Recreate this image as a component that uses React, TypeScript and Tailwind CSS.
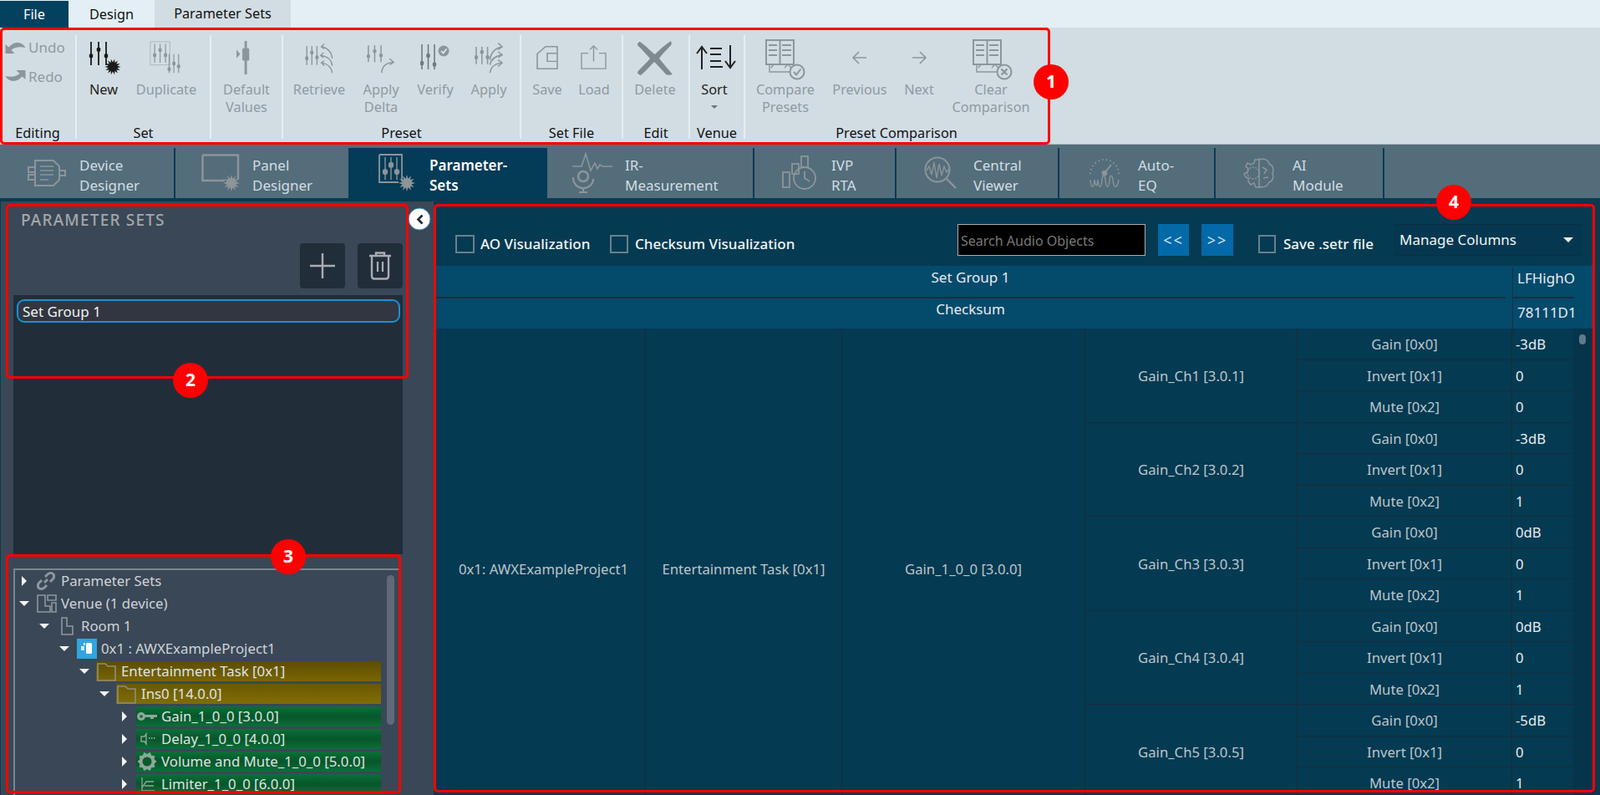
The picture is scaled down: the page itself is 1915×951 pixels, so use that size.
import React from "react";

const G = "#8b969c";
const star = (cx: number, cy: number, r1: number, r2: number, n = 12) => {
  const p: string[] = [];
  for (let i = 0; i < n * 2; i++) {
    const r = i % 2 ? r2 : r1;
    const a = (Math.PI * i) / n;
    p.push(`${(cx + r * Math.cos(a)).toFixed(1)},${(cy + r * Math.sin(a)).toFixed(1)}`);
  }
  return p.join(" ");
};

function Sl({ x, y, h, c, gap = 9, sw = 1.6, k = [0.45, 0.25, 0.6], n = 3 }: { x: number; y: number; h: number; c: string; gap?: number; sw?: number; k?: number[]; n?: number }) {
  return (
    <g>
      {Array.from({ length: n }).map((_, i) => (
        <g key={i}>
          <line x1={x + i * gap} y1={y} x2={x + i * gap} y2={y + h} stroke={c} strokeWidth={sw} />
          <rect x={x + i * gap - 2.2} y={y + h * k[i % 3] - 2.5} width={4.4} height={5} rx={1.5} fill={c} />
        </g>
      ))}
    </g>
  );
}

const Arrow = ({ d, c = G, head }: { d: string; c?: string; head: string }) => (
  <g fill="none" stroke={c} strokeWidth="1.6">
    <path d={d} />
    <path d={head} />
  </g>
);

function UndoI({ flip }: { flip?: boolean }) {
  return (
    <svg width="25" height="17" viewBox="0 0 25 17" className={flip ? "rotate-180" : ""}>
      <path d="M0.5 5 L0.5 16 L11.5 16 L7.5 12 C11 8.5 17 7.5 24.5 9 C21 2.5 12 0 4.5 8.5 Z" fill={G} />
    </svg>
  );
}

const icons: Record<string, React.ReactNode> = {
  New: (
    <svg width="40" height="42" viewBox="0 0 40 42" className="ml-[4px]">
      <Sl x={3} y={2} h={28} c="#1a1a1a" gap={9} sw={1.8} k={[0.6, 0.33, 0.6]} />
      <polygon points={star(29, 32, 9.5, 5.5, 14)} fill="#1a1a1a" />
    </svg>
  ),
  Duplicate: (
    <svg width="42" height="40" viewBox="0 0 46 46">
      <rect x="1" y="1" width="27" height="32" fill="none" stroke={G} strokeWidth="1" strokeDasharray="1.5 1" />
      <Sl x={7} y={4} h={26} c={G} gap={7.5} sw={1.4} k={[0.6, 0.33, 0.6]} />
      <Sl x={27} y={18} h={26} c={G} gap={6.5} sw={1.4} k={[0.8, 0.5, 0.65]} />
    </svg>
  ),
  "Default Values": (
    <svg width="21" height="40" viewBox="0 0 24 46" className="-ml-[4px]">
      <rect x="11" y="0" width="3.4" height="46" fill={G} />
      <rect x="8" y="10" width="9.5" height="17" rx="1.5" fill={G} />
      <path d="M0 12 L5 18 L0 24 Z" fill={G} />
    </svg>
  ),
  Retrieve: (
    <svg width="36" height="40" viewBox="0 0 40 46">
      <Sl x={3} y={7} h={26} c={G} gap={7} k={[0.65, 0.35, 0.6]} />
      <Arrow d="M38 24 C37 15 31 9 23 8" head="M27 4 L23 8 L27 11" />
      <Arrow d="M38 34 C37 26 31 21 22 20" head="M26 16 L22 20 L26 23" />
      <Arrow d="M38 44 C37 36 31 31 23 30" head="M27 27 L23 30 L27 34" />
    </svg>
  ),
  "Apply Delta": (
    <svg width="34" height="37" viewBox="0 0 36 46" className="mt-[2px]" preserveAspectRatio="none">
      <Sl x={2} y={4} h={25} c={G} gap={8} k={[0.65, 0.35, 0.6]} />
      <Arrow d="M19 45 C19 35 24 30 34 29" head="M29 24 L34 29 L29 33" />
    </svg>
  ),
  Verify: (
    <svg width="36" height="34" viewBox="0 0 36 34">
      <Sl x={2} y={1} h={30} c="#6f7a80" gap={7.5} k={[0.75, 0.45, 0.8]} />
      <circle cx="28" cy="9" r="6.5" fill={G} />
      <path d="M25 9 L27.5 11.5 L31.5 6.5" fill="none" stroke="#e6edf0" strokeWidth="1.6" />
    </svg>
  ),
  Apply: (
    <svg width="35" height="40" viewBox="0 0 36 46" preserveAspectRatio="none">
      <Sl x={2} y={8} h={24} c={G} gap={7} k={[0.6, 0.3, 0.6]} />
      <Arrow d="M19 26 C20 15 25 10 34 8" head="M29 3 L34 8 L29 12" />
      <Arrow d="M19 33 C20 25 25 21 34 19" head="M29 15 L34 19 L29 23" />
      <Arrow d="M19 44 C20 35 25 31 34 30" head="M29 26 L34 30 L29 35" />
    </svg>
  ),
  Save: (
    <svg width="26" height="30" viewBox="0 0 26 34" preserveAspectRatio="none">
      <path d="M1 12 L11 2 L25 2 L25 32 L1 32 Z" fill="none" stroke={G} strokeWidth="1.6" />
      <path d="M25 11 L13 11 L13 22 L25 22" fill="none" stroke={G} strokeWidth="1.6" />
    </svg>
  ),
  Load: (
    <svg width="32" height="30" viewBox="0 0 32 34" preserveAspectRatio="none">
      <path d="M9 11 L1 11 L1 32 L30 32 L30 11 L22 11" fill="none" stroke={G} strokeWidth="1.4" />
      <path d="M15.5 22 L15.5 1 M11 6 L15.5 1 L20 6" fill="none" stroke={G} strokeWidth="1.4" />
    </svg>
  ),
  Delete: (
    <svg width="46" height="46" viewBox="0 0 46 46">
      <path d="M5 4 C14 10 18 16 23 19 C28 14 34 8 42 3 C43 6 43 7 42 8 C36 15 31 19 28 24 C33 30 38 36 44 43 C40 44 38 44 36 43 C31 37 27 33 22 28 C17 33 11 40 6 44 C3 43 2 42 2 40 C8 33 13 29 17 24 C12 18 7 13 2 8 C2 6 3 4 5 4 Z" fill="#7f8a90" />
    </svg>
  ),
  Sort: (
    <svg width="48" height="30" viewBox="0 0 48 30" className="ml-[4px]">
      <path d="M7 29 L7 2 M1 10 L7 2 L13 10" fill="none" stroke="#222" strokeWidth="2" />
      <path d="M41 0 L41 27 M35 19 L41 27 L47 19" fill="none" stroke="#222" strokeWidth="2" />
      <path d="M17 4 H31 M17 11 H30 M17 19 H30 M17 26 H32" stroke="#222" strokeWidth="2" />
    </svg>
  ),
  "Compare Presets": (
    <svg width="50" height="52" viewBox="0 0 50 52" className="mt-[6px]">
      <path d="M2 2 H35 V31 H2 Z M18.5 2 V31" fill="none" stroke={G} strokeWidth="2" />
      <path d="M5 8 H15 M5 14 H15 M5 20 H15 M21 8 H32 M21 14 H32 M21 20 H32" stroke={G} strokeWidth="2" />
      <path d="M6 31 V40 H30 M8 35 L11 31 M24 35 L28 31 L32 35" fill="none" stroke={G} strokeWidth="1.4" />
      <circle cx="39" cy="40" r="8.5" fill="#d2dde3" stroke={G} strokeWidth="2" />
      <path d="M35 40 L38 43.5 L43.5 36.5" fill="none" stroke={G} strokeWidth="2" />
    </svg>
  ),
  Previous: (
    <svg width="20" height="18" viewBox="0 0 20 18">
      <path d="M18 9 H2 M9 2 L2 9 L9 16" fill="none" stroke={G} strokeWidth="1.6" />
    </svg>
  ),
  Next: (
    <svg width="20" height="18" viewBox="0 0 20 18">
      <path d="M2 9 H18 M11 2 L18 9 L11 16" fill="none" stroke={G} strokeWidth="1.6" />
    </svg>
  ),
  "Clear Comparison": (
    <svg width="50" height="52" viewBox="0 0 50 52" className="mt-[6px] ml-[3px]">
      <path d="M2 2 H35 V31 H2 Z M18.5 2 V31" fill="none" stroke={G} strokeWidth="2" />
      <path d="M5 8 H15 M5 14 H15 M5 20 H15 M21 8 H32 M21 14 H32 M21 20 H32" stroke={G} strokeWidth="2" />
      <path d="M6 31 V40 H30 M8 35 L11 31 M24 35 L28 31 L32 35" fill="none" stroke={G} strokeWidth="1.4" />
      <circle cx="39" cy="40" r="8.5" fill="#d2dde3" stroke={G} strokeWidth="2" />
      <path d="M35.5 36.5 L42.5 43.5 M42.5 36.5 L35.5 43.5" fill="none" stroke={G} strokeWidth="2.4" />
    </svg>
  ),
};

type Item = { key: string; lines: string[]; w: string; dark?: boolean; caret?: boolean };
type Group = { label: string; w: string; items: Item[] };

const groups: Group[] = [
  { label: "Set", w: "w-[159px]", items: [
    { key: "New", lines: ["New"], w: "w-[64px]", dark: true },
    { key: "Duplicate", lines: ["Duplicate"], w: "w-[86px]" } ] },
  { label: "", w: "w-[84px]", items: [ { key: "Default Values", lines: ["Default", "Values"], w: "w-[84px]" } ] },
  { label: "Preset", w: "w-[283px]", items: [
    { key: "Retrieve", lines: ["Retrieve"], w: "w-[86px]" },
    { key: "Apply Delta", lines: ["Apply", "Delta"], w: "w-[62px]" },
    { key: "Verify", lines: ["Verify"], w: "w-[68px]" },
    { key: "Apply", lines: ["Apply"], w: "w-[60px]" } ] },
  { label: "Set File", w: "w-[120px]", items: [
    { key: "Save", lines: ["Save"], w: "w-[62px]" },
    { key: "Load", lines: ["Load"], w: "w-[50px]" } ] },
  { label: "Edit", w: "w-[78px]", items: [ { key: "Delete", lines: ["Delete"], w: "w-[76px]" } ] },
  { label: "Venue", w: "w-[64px]", items: [ { key: "Sort", lines: ["Sort"], w: "w-[58px]", dark: true, caret: true } ] },
  { label: "Preset Comparison", w: "w-[362px]", items: [
    { key: "Compare Presets", lines: ["Compare", "Presets"], w: "w-[96px]" },
    { key: "Previous", lines: ["Previous"], w: "w-[82px]" },
    { key: "Next", lines: ["Next"], w: "w-[60px]" },
    { key: "Clear Comparison", lines: ["Clear", "Comparison"], w: "w-[112px]" } ] },
];

const Sep = () => <div className="w-[2px] h-[124px] mt-[9px] bg-[#e6eef2] shrink-0" />;

function Ribbon() {
  return (
    <div className="h-[140px] bg-[#d2dde3] flex shrink-0 border-b border-[#aab6bc] text-[16.3px]">
      <div className="w-[90px] shrink-0 flex flex-col">
        <div className="h-[114px] pl-[6px] pt-[15px] flex flex-col gap-[18px] text-[#8f9a9f]">
          <div className="flex items-center gap-[3px] h-[17px] text-[17px]"><UndoI /><span>Undo</span></div>
          <div className="flex items-center gap-[3px] h-[17px] text-[17px]"><UndoI flip /><span>Redo</span></div>
        </div>
        <div className="text-center text-[#111] leading-[24px]">Editing</div>
      </div>
      {groups.map((g) => (
        <React.Fragment key={g.w + g.label}>
          <Sep />
          <div className={`${g.w} shrink-0 flex flex-col`}>
            <div className="h-[114px] flex">
              {g.items.map((it) => (
                <div key={it.key} className={`${it.w} shrink-0 flex flex-col items-center`}>
                  <div className="h-[57px] mt-[7px] flex items-center justify-center">{icons[it.key]}</div>
                  <div className={`text-center leading-[21px] ${it.dark ? "text-[#222]" : "text-[#8f9a9f]"}`}>
                    {it.lines.map((l) => <div key={l}>{l}</div>)}
                    {it.caret && <div className="w-0 h-0 mx-auto mt-[8px] border-x-[4px] border-x-transparent border-t-[4px] border-t-[#6d777c]" />}
                  </div>
                </div>
              ))}
            </div>
            <div className="text-center text-[#111] leading-[24px]">{g.label}</div>
          </div>
        </React.Fragment>
      ))}
    </div>
  );
}

const N = "#8d9599";
const navIcons: Record<string, React.ReactNode> = {
  device: (
    <svg width="46" height="34" viewBox="0 0 46 34" fill="none" stroke={N} strokeWidth="2">
      <path d="M9 2 H31 L38 9 V25 L31 32 H9 Z" />
      <path d="M1 10 H9 V16 H1 Z M1 19 H9 V25 H1 Z M38 14 H45 V20 H38 Z" />
      <path d="M15 9 H31 M15 14 H31 M15 19 H31 M15 25 H25" strokeWidth="1.5" />
    </svg>
  ),
  panel: (
    <svg width="46" height="46" viewBox="0 0 46 46" fill="none" stroke={N} strokeWidth="2.4">
      <path d="M1.5 1.5 H44 V31 M1.5 1.5 V32 H28" />
      <polygon points={star(36, 35, 10, 5.5, 12)} fill={N} stroke="none" />
    </svg>
  ),
  params: (
    <svg width="46" height="46" viewBox="0 0 46 46" fill="none" stroke={N} strokeWidth="1.8">
      <path d="M1 1 H28 V33 M1 1 V34 H24" />
      <Sl x={8} y={4} h={27} c={N} gap={7} sw={1.4} k={[0.65, 0.35, 0.65]} />
      <polygon points={star(34, 35, 10, 5.5, 12)} fill={N} stroke="none" />
    </svg>
  ),
  ir: (
    <svg width="48" height="50" viewBox="0 0 48 50" fill="none" stroke={N} strokeWidth="1.6">
      <path d="M0 17 H11 L16 2 L22 22 L27 13 L30 20 L33 15 L36 17 H48" />
      <circle cx="13" cy="29" r="6" strokeWidth="2.5" />
      <path d="M1 30 C1 39 7 43 13 43 C19 43 25 39 25 32 M13 43 V48 M8 48 H18" strokeWidth="2.2" />
    </svg>
  ),
  ivp: (
    <svg width="42" height="42" viewBox="0 0 42 42" fill="none" stroke={N} strokeWidth="1.8">
      <rect x="1" y="20" width="8" height="18" />
      <rect x="12" y="10" width="8" height="12" />
      <rect x="23" y="1" width="8" height="13" />
      <circle cx="27" cy="27" r="13" />
      <path d="M27 19 V27 L33 31" />
    </svg>
  ),
  central: (
    <svg width="40" height="40" viewBox="0 0 40 40" fill="none" stroke={N} strokeWidth="1.4">
      <circle cx="16" cy="16" r="14.5" strokeWidth="2" />
      <path d="M3 17 L6 12 L9 22 L12 7 L15 26 L18 9 L21 23 L24 12 L27 19 L30 15" />
      <path d="M27 27 L38 38" strokeWidth="2.4" />
    </svg>
  ),
  auto: (
    <svg width="38" height="38" viewBox="0 0 38 38" fill="none" stroke={N} strokeWidth="1.4">
      <path d="M2 20 A17 17 0 0 1 36 20" strokeWidth="2" strokeDasharray="1.5 3.2" />
      <path d="M19 19 L27 9" strokeWidth="2" />
      <circle cx="19" cy="19" r="2.6" fill={N} />
      <path d="M2 27 C3 38 6 38 7 27 C8 34 10 38 11 27 C12 38 15 38 16 27 C17 20 19 20 20 27 C21 38 24 38 25 27 C26 20 28 21 29 27 C30 38 34 38 36 27" />
    </svg>
  ),
  ai: (
    <svg width="38" height="38" viewBox="0 0 38 38" fill="none" stroke={N} strokeWidth="1.5">
      <path d="M18 3 L14 3 L13 7 L9 9 L5 7 L3 11 L6 14 L5 18 L1 20 L3 24 L6 25 L6 29 L9 33 L13 31 L15 36 L19 36" />
      <circle cx="12" cy="19" r="7" strokeDasharray="2 1.5" />
      <path d="M19 1 V37 M19 3 C25 1 30 3 31 8 C36 10 37 15 35 19 C37 24 35 29 31 30 C29 35 24 37 19 35" />
      <path d="M23 12 L28 15 L25 20 M24 25 L30 24" />
    </svg>
  ),
};

const navs = [
  { id: "device", a: "Device", b: "Designer", w: "w-[209px]", pl: "pl-[32px]", iw: "w-[62px]" },
  { id: "panel", a: "Panel", b: "Designer", w: "w-[209px]", pl: "pl-[31px]", iw: "w-[61px]" },
  { id: "params", a: "Parameter-", b: "Sets", w: "w-[236px]", pl: "pl-[34px]", iw: "w-[61px]", active: true },
  { id: "ir", a: "IR-", b: "Measurement", w: "w-[248px]", pl: "pl-[30px]", iw: "w-[63px]" },
  { id: "ivp", a: "IVP", b: "RTA", w: "w-[170px]", pl: "pl-[33px]", iw: "w-[59px]" },
  { id: "central", a: "Central", b: "Viewer", w: "w-[195px]", pl: "pl-[33px]", iw: "w-[59px]" },
  { id: "auto", a: "Auto-", b: "EQ", w: "w-[187px]", pl: "pl-[35px]", iw: "w-[59px]" },
  { id: "ai", a: "AI", b: "Module", w: "w-[202px]", pl: "pl-[33px]", iw: "w-[59px]" },
];

function NavTabs() {
  return (
    <div className="h-[64px] pt-[4px] bg-[#536d7b] shrink-0">
      <div className="h-[60px] flex">
        <div className="w-px" />
        {navs.map((n) => (
          <div key={n.id} className={`${n.w} ${n.pl} shrink-0 h-full flex items-center border-r-2 ${n.active ? "bg-[#043b57] border-[#043b57] text-white font-semibold" : "border-[#0d3a50] text-[#d2dde3]"}`}>
            <div className={`${n.iw} shrink-0`}>{navIcons[n.id]}</div>
            <div className="text-[17px] leading-[24px] pt-[5px]">
              <div>{n.a}</div>
              <div>{n.b}</div>
            </div>
          </div>
        ))}
      </div>
    </div>
  );
}

const Tri = ({ open }: { open?: boolean }) =>
  open ? (
    <div className="w-0 h-0 border-x-[6px] border-x-transparent border-t-[6px] border-t-[#f2f4f5]" />
  ) : (
    <div className="w-0 h-0 border-y-[6px] border-y-transparent border-l-[6px] border-l-[#f2f4f5]" />
  );

const T = "#8e979f";
const treeIcons: Record<string, React.ReactNode> = {
  link: (
    <svg width="22" height="22" viewBox="0 0 22 22" fill="none" stroke={T} strokeWidth="3">
      <path d="M9 13 L13 9 M10 6 L13 3 C15 1 18 1 20 3 C21 5 21 7 19 9 L16 12 M12 16 L9 19 C7 21 4 21 2 19 C1 17 1 15 3 13 L6 10" />
    </svg>
  ),
  venue: (
    <svg width="24" height="22" viewBox="0 0 24 22" fill="none" stroke={T} strokeWidth="1.6">
      <path d="M1 1 H10 V14 H16 V21 H1 Z M13 1 H23 V7 H13 Z M18 10 H23 V21 H18 Z" />
    </svg>
  ),
  room: (
    <svg width="18" height="22" viewBox="0 0 18 22" fill="none" stroke={T} strokeWidth="1.6" className="ml-[3px]">
      <path d="M3 1 H9 V11 H16 V21 H3 Z" />
    </svg>
  ),
  chip: (
    <div className="w-[24px] h-[24px] bg-[#2fa6e0] flex items-center justify-center">
      <svg width="16" height="16" viewBox="0 0 16 16" fill="#fff">
        <rect x="7" y="1" width="7" height="13" rx="1.5" />
        <rect x="1" y="5" width="4" height="5" fill="#cfeafa" />
        <rect x="4" y="1" width="2" height="3" fill="#cfeafa" />
      </svg>
    </div>
  ),
  folder: (
    <svg width="24" height="24" viewBox="0 0 24 24" fill="none" stroke="#8d8f80" strokeWidth="1.6">
      <path d="M1 3 H10 L13 6 H22 V23 H1 Z" />
    </svg>
  ),
  gain: (
    <svg width="24" height="14" viewBox="0 0 24 14" fill="#8ea79a">
      <circle cx="5" cy="7" r="5" />
      <circle cx="5" cy="7" r="1.8" fill="#0a6a33" />
      <path d="M9 5 H24 V8 H20 V10 H16 V8 H9 Z" />
    </svg>
  ),
  delay: (
    <svg width="18" height="16" viewBox="0 0 18 16" fill="none" stroke="#8ea79a" strokeWidth="1.4" className="ml-[4px]">
      <path d="M1 5 H5 L7 2 V14 L5 11 H1 Z" />
      <path d="M10 7 H11.5 M13 7 H14.5 M16 7 H17.5" strokeWidth="2" />
    </svg>
  ),
  gear: (
    <svg width="24" height="24" viewBox="0 0 24 24">
      <polygon points={star(12, 12, 11.5, 9, 10)} fill="#8ea79a" />
      <circle cx="12" cy="12" r="5.5" fill="#0a5a2e" />
    </svg>
  ),
  lim: (
    <svg width="18" height="18" viewBox="0 0 18 18" fill="none" stroke="#8ea79a" strokeWidth="1.3" className="ml-[4px]">
      <path d="M2 1 V17 H17 M2 13 L7 6 H16 M5 11 H16" />
    </svg>
  ),
};

const rows: { t: string; pl: string; open?: boolean; icon: string; kind?: "gold" | "gold2" | "green" }[] = [
  { t: "Parameter Sets", pl: "pl-[3px]", icon: "link" },
  { t: "Venue (1 device)", pl: "pl-[3px]", open: true, icon: "venue" },
  { t: "Room 1", pl: "pl-[27px]", open: true, icon: "room" },
  { t: "0x1 : AWXExampleProject1", pl: "pl-[51px]", open: true, icon: "chip" },
  { t: "Entertainment Task [0x1]", pl: "pl-[75px]", open: true, icon: "folder", kind: "gold" },
  { t: "Ins0 [14.0.0]", pl: "pl-[99px]", open: true, icon: "folder", kind: "gold2" },
  { t: "Gain_1_0_0 [3.0.0]", pl: "pl-[123px]", icon: "gain", kind: "green" },
  { t: "Delay_1_0_0 [4.0.0]", pl: "pl-[123px]", icon: "delay", kind: "green" },
  { t: "Volume and Mute_1_0_0 [5.0.0]", pl: "pl-[123px]", icon: "gear", kind: "green" },
  { t: "Limiter_1_0_0 [6.0.0]", pl: "pl-[123px]", icon: "lim", kind: "green" },
];

const kindCls: Record<string, string> = {
  gold: "bg-gradient-to-b from-[#5d4d02] to-[#7a6603] text-[#dfe3e3]",
  gold2: "bg-gradient-to-b from-[#6a5803] to-[#816d05] text-[#dfe3e3]",
  green: "bg-gradient-to-b from-[#0b7038] via-[#06562a] to-[#0b7038] text-[#dfe3e3]",
};

function Tree() {
  return (
    <div className="h-[288px] pt-[17px] shrink-0 text-[16.8px]">
      <div className="w-[462px] h-[271px] border-t-2 border-l-2 border-[#7b8590] flex overflow-hidden">
        <div className="w-[438px] shrink-0 -mt-[1px]">
          {rows.map((r) => (
            <div key={r.t} className={`h-[27px] flex items-center ${r.pl} text-[#cdd3d8]`}>
              <div className="w-[16px] flex justify-center shrink-0"><Tri open={r.open} /></div>
              <div className={`ml-[6px] flex-1 h-[24px] flex items-center ${r.kind ? kindCls[r.kind] : ""}`}>
                <div className="w-[30px] shrink-0 flex items-center pl-px">{treeIcons[r.icon]}</div>
                <span className="whitespace-nowrap">{r.t}</span>
              </div>
            </div>
          ))}
        </div>
        <div className="w-[9px] h-[179px] mt-[6px] ml-[7px] rounded-full bg-[#5e6a78] shrink-0" />
      </div>
    </div>
  );
}

function LeftPanel() {
  return (
    <div className="w-[518px] ml-px shrink-0 bg-[#3a4756] flex flex-col pl-[15px] pt-[13px] h-[710px]">
      <div className="w-[466px] flex flex-col flex-1">
        <div className="h-[19px] pl-[9px] text-[19px] leading-[19px] font-medium tracking-[1.2px] text-[#a3a7ab]">PARAMETER SETS</div>
        <div className="flex justify-end gap-[15px] mt-[18px]">
          <div className="w-[54px] h-[54px] rounded-[4px] bg-[#222d3a] flex items-center justify-center">
            <svg width="32" height="32" viewBox="0 0 32 32"><path d="M16 1 V31 M1 16 H31" stroke="#a9adb2" strokeWidth="2.4" /></svg>
          </div>
          <div className="w-[54px] h-[54px] rounded-[4px] bg-[#222d3a] flex items-center justify-center">
            <svg width="28" height="34" viewBox="0 0 28 34" fill="none" stroke="#a9adb2" strokeWidth="2.4">
              <path d="M1 5 H27 M9 5 V1.5 H19 V5 M4 5 V29 C4 31 5 32.5 7 32.5 H21 C23 32.5 24 31 24 29 V5" />
              <path d="M11 12 V24 M17 12 V24" strokeWidth="2.2" />
            </svg>
          </div>
        </div>
        <div className="mt-[8px] flex-1 bg-[#222d3a] pt-[5px] pl-[4px] pr-[3px]">
          <div className="h-[28px] rounded-[9px] border-[2.5px] border-[#1793d1] bg-[#323640] text-[#f0f2f3] text-[17px] flex items-center pl-[5px] leading-none">Set Group 1</div>
        </div>
      </div>
      <Tree />
    </div>
  );
}

const Check = ({ w }: { w: string }) => <div className={`${w} h-[22px] mt-[13px] border-2 border-[#6b7f8c] shrink-0`} />;
const Label = ({ w, ml, children }: { w: string; ml: string; children: React.ReactNode }) => (
  <div className={`${w} ${ml} mt-[13px] h-[22px] leading-[22px] shrink-0 whitespace-nowrap font-['Roboto',sans-serif] font-medium text-[17px] text-[#f2f5f6]`}>{children}</div>
);

const channels = [
  { n: "Gain_Ch1 [3.0.1]", v: ["-3dB", "0", "0"] },
  { n: "Gain_Ch2 [3.0.2]", v: ["-3dB", "0", "1"] },
  { n: "Gain_Ch3 [3.0.3]", v: ["0dB", "0", "1"] },
  { n: "Gain_Ch4 [3.0.4]", v: ["0dB", "0", "1"] },
  { n: "Gain_Ch5 [3.0.5]", v: ["-5dB", "0", "1"] },
];
const props = ["Gain [0x0]", "Invert [0x1]", "Mute [0x2]"];
const LINE = "border-[#1a2b38]";

function RightPanel() {
  return (
    <div className="w-[1387px] ml-[2px] shrink-0 bg-[#043a52] flex flex-col h-[708px] mt-[2px] overflow-hidden text-[16.7px]">
      <div className="h-[75px] flex items-start pl-[24px] pt-[25px] shrink-0">
        <Check w="w-[23px]" />
        <Label w="w-[131px]" ml="ml-[7px]">AO Visualization</Label>
        <div className="ml-[24px]"><Check w="w-[22px]" /></div>
        <Label w="w-[190px]" ml="ml-[8px]">Checksum Visualization</Label>
        <div className="ml-[196px] w-[225px] h-[38px] bg-black border border-[#a8adb0] flex items-center pl-[3px] pt-[2px] text-[16px] text-[#77797b] shrink-0">Search Audio Objects</div>
        <div className="ml-[15px] w-[37px] h-[38px] bg-[#0369a8] flex items-center justify-center text-[#d9e6ee] tracking-[2px] text-[18px]">&lt;&lt;</div>
        <div className="ml-[15px] w-[38px] h-[38px] bg-[#0369a8] flex items-center justify-center text-[#d9e6ee] tracking-[2px] text-[18px]">&gt;&gt;</div>
        <div className="ml-[30px]"><Check w="w-[21px]" /></div>
        <Label w="w-[109px]" ml="ml-[9px]">Save .setr file</Label>
        <div className="ml-[24px] w-[224px] h-[38px] rounded-[4px] bg-[#053850] border-y border-[#0f2c3e] flex items-center justify-between pl-[6px] pr-[10px] text-[17px] text-[#f2f5f6] shrink-0">
          <span>Manage Columns</span>
          <div className="w-0 h-0 border-x-[6px] border-x-transparent border-t-[6px] border-t-[#f2f4f5]" />
        </div>
      </div>
      <div className="h-[75px] flex bg-[#044a6b] shrink-0 text-[#e6ecef] text-[17px]">
        <div className="w-[1289px] shrink-0">
          <div className="w-[1281px] h-[39px] border-b-2 border-[#13303f] text-center leading-[28px]">Set Group 1</div>
          <div className="w-[1281px] text-center leading-[26px]">Checksum</div>
        </div>
        <div className="w-[98px] border-l border-[#13303f] mt-px">
          <div className="h-[38px] w-[73px] border-b-2 border-[#13303f] pl-[5px] whitespace-nowrap leading-[28px]">LFHighO</div>
          <div className="w-[73px] pl-[5px] whitespace-nowrap leading-[34px]">78111D1</div>
        </div>
      </div>
      <div className="flex text-[#bcc5ca] overflow-hidden">
        <div className={`w-[252px] h-[576px] shrink-0 border-r ${LINE} flex items-center justify-center pl-[8px]`}>0x1: AWXExampleProject1</div>
        <div className={`w-[235px] h-[576px] shrink-0 border-r ${LINE} flex items-center justify-center`}>Entertainment Task [0x1]</div>
        <div className={`w-[291px] h-[576px] shrink-0 border-r ${LINE} flex items-center justify-center`}>Gain_1_0_0 [3.0.0]</div>
        <div className="w-[584px] shrink-0">
          {channels.map((c) => (
            <div key={c.n} className="flex">
              <div className={`w-[254px] h-[112.5px] shrink-0 border-r border-b ${LINE} flex items-center justify-center pt-[1px]`}>{c.n}</div>
              <div className="flex-1">
                {props.map((p, i) => (
                  <div key={p} className={`h-[37.5px] flex border-b ${LINE} pt-[1.5px]`}>
                    <div className={`w-[257px] shrink-0 -mt-[1.5px] pt-[1.5px] border-r ${LINE} flex items-center justify-center`}>{p}</div>
                    <div className="flex-1 pl-[4px] flex items-center text-[#e8edf0]">{c.v[i]}</div>
                  </div>
                ))}
              </div>
            </div>
          ))}
        </div>
        <div className="flex-1 flex justify-center pt-[7px] bg-[#05344b]">
          <div className="w-[8px] h-[12px] rounded-full bg-[#5e7a8a] mr-[3px]" />
        </div>
      </div>
    </div>
  );
}

const Anno = ({ cls }: { cls: string }) => <div className={`absolute border-[3px] border-[#ff0000] rounded-[5px] pointer-events-none ${cls}`} />;
const Badge = ({ cls, n }: { cls: string; n: number }) => (
  <div className={`absolute w-[42px] h-[42px] rounded-full bg-[#ff0000] text-white font-bold text-[21px] flex items-center justify-center font-['Liberation_Sans',sans-serif] ${cls}`}>{n}</div>
);

export default function App() {
  return (
    <div className="relative w-[1915px] h-[951px] overflow-hidden bg-[#0b3a50] font-['Open_Sans',sans-serif] text-[16px] flex flex-col">
      <div className="h-[33px] bg-[#e3eff5] flex items-end shrink-0 text-[#111] text-[16.3px]">
        <div className="w-[82px] h-[32px] bg-[#04415f] text-white flex items-center justify-center">File</div>
        <div className="w-[103px] h-[32px] flex items-center justify-center">Design</div>
        <div className="w-[163px] h-[33px] bg-[#d2dde3] flex items-center justify-center">Parameter Sets</div>
      </div>
      <Ribbon />
      <NavTabs />
      <div className="flex pt-[4px] flex-1 bg-[#0b3a50] items-start">
        <LeftPanel />
        <RightPanel />
      </div>

      <div className="absolute left-[502px] top-[262px] -translate-x-1/2 -translate-y-1/2 w-[27px] h-[27px] rounded-full bg-white border border-[#2f8fc4] flex items-center justify-center">
        <svg width="10" height="12" viewBox="0 0 10 12"><path d="M8 1 L3 6 L8 11" fill="none" stroke="#1d2a33" strokeWidth="2.6" /></svg>
      </div>

      <Anno cls="left-0 top-[33px] w-[1257px] h-[140px]" />
      <Anno cls="left-[7px] top-[244px] w-[482px] h-[209px]" />
      <Anno cls="left-[7px] top-[663px] w-[473px] h-[286px]" />
      <Anno cls="left-[519px] top-[244px] w-[1390px] h-[704px]" />
      <Badge cls="left-[1237px] top-[77px]" n={1} />
      <Badge cls="left-[207px] top-[434px]" n={2} />
      <Badge cls="left-[324px] top-[645px]" n={3} />
      <Badge cls="left-[1719px] top-[221px]" n={4} />
    </div>
  );
}
